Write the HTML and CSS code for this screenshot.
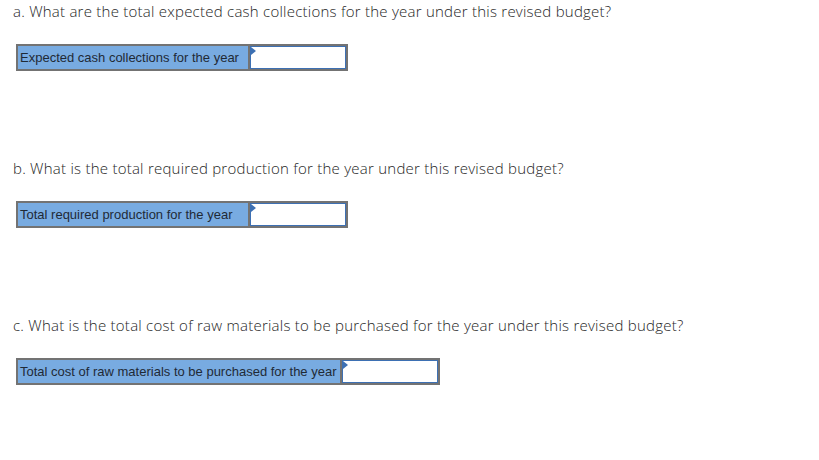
FILE: index.html
```html
<!DOCTYPE html>
<html>
<head>
<meta charset="utf-8">
<link rel="stylesheet" href="styles.css">
</head>
<body>
<div class="page">
  <section class="part part-a">
    <p class="question">a. What are the total expected cash collections for the year under this revised budget?</p>
    <div class="answer">
      <div class="label">Expected cash collections for the year</div>
      <div class="cell"><span class="marker"></span></div>
    </div>
  </section>
  <section class="part">
    <p class="question">b. What is the total required production for the year under this revised budget?</p>
    <div class="answer">
      <div class="label">Total required production for the year</div>
      <div class="cell"><span class="marker"></span></div>
    </div>
  </section>
  <section class="part">
    <p class="question">c. What is the total cost of raw materials to be purchased for the year under this revised budget?</p>
    <div class="answer">
      <div class="label">Total cost of raw materials to be purchased for the year</div>
      <div class="cell"><span class="marker"></span></div>
    </div>
  </section>
</div>
</body>
</html>
```
FILE: styles.css
```css
html, body {
  margin: 0;
  padding: 0;
  background: #ffffff;
}
.page {
  display: flex;
  flex-direction: column;
  padding: 0 0 0 13px;
}
.part {
  display: flex;
  flex-direction: column;
  align-items: flex-start;
  height: 157px;
}
.question {
  margin: 0;
  padding-top: 0;
  font-family: "Open Sans", "Lato", sans-serif;
  font-weight: 300;
  font-size: 15px;
  letter-spacing: 0.24px;
  line-height: 22px;
  color: #1e1e1e;
}
.answer {
  display: flex;
  margin: 22px 0 0 3px;
  border: 1px solid #737373;
  height: 25px;
}
.label {
  min-width: 225px;
  background: #78abe1;
  border: 1px solid #737373;
  padding: 0 3px 0 2px;
  font-family: "Liberation Sans", Arial, sans-serif;
  font-size: 13px;
  line-height: 23px;
  color: #1f2a36;
  white-space: nowrap;
}
.cell {
  position: relative;
  width: 98px;
  background: #fff;
  border: 1px solid #737373;
  box-shadow: inset 0 0 0 1px #3d70b3;
  box-sizing: border-box;
  height: 25px;
}
.marker {
  position: absolute;
  left: 1px;
  top: 1px;
  width: 0;
  height: 0;
  border-top: 4px solid transparent;
  border-bottom: 4px solid transparent;
  border-left: 5px solid #3d70b3;
}
```
